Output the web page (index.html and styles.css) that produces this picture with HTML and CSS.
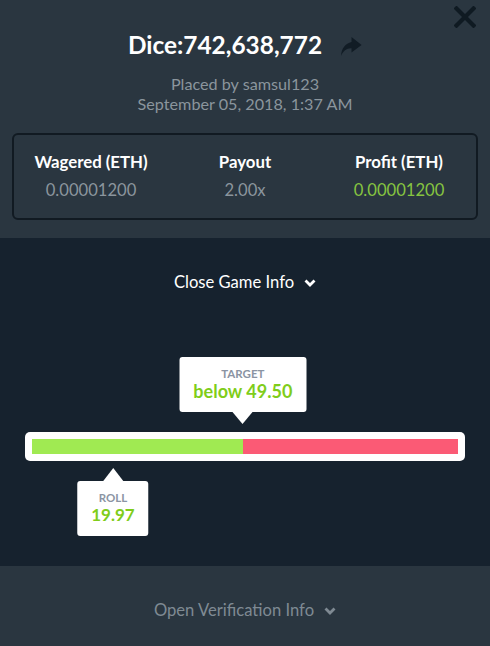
FILE: index.html
```html
<!DOCTYPE html>
<html lang="en">
<head>
  <meta charset="UTF-8" />
  <meta name="viewport" content="width=device-width, initial-scale=1.0" />
  <title>Bet Details</title>
  <link rel="stylesheet" href="styles.css">
</head>
<body>
  <div class="modal">
    <section class="bet-head">
      <button class="close-btn" aria-label="Close">
        <svg width="22" height="22" viewBox="0 0 22 22"><path d="M2.5 2.5 L19.5 19.5 M19.5 2.5 L2.5 19.5" stroke="#0f1a22" stroke-width="4.2" stroke-linecap="square"/></svg>
      </button>
      <div class="title-row">
        <h1>Dice:742,638,772</h1>
        <svg class="share" width="21" height="19" viewBox="0 0 21 19"><path d="M10.5 0 L20.6 8 L10.5 15.5 L10.5 11.2 C5.5 11 2.2 13.8 0 19 C0.4 11.5 4.5 6.2 10.5 5 Z" fill="#111c25"/></svg>
      </div>
      <p class="meta">Placed by samsul123</p>
      <p class="meta">September 05, 2018, 1:37 AM</p>

      <div class="stats">
        <div class="stat">
          <span class="stat-label">Wagered (ETH)</span>
          <span class="stat-value">0.00001200</span>
        </div>
        <div class="stat">
          <span class="stat-label">Payout</span>
          <span class="stat-value">2.00x</span>
        </div>
        <div class="stat">
          <span class="stat-label">Profit (ETH)</span>
          <span class="stat-value win">0.00001200</span>
        </div>
      </div>
    </section>

    <section class="game-info">
      <button class="toggle light">Close Game Info
        <svg width="12" height="8" viewBox="0 0 12 8"><path d="M1.5 1.5 L6 6 L10.5 1.5" fill="none" stroke="#fff" stroke-width="2.8"/></svg>
      </button>

      <div class="bar">
        <div class="track">
          <div class="bar-win" style="width: 49.5%"></div>
          <div class="bar-lose"></div>
          <div class="tip tip-top" style="left: 49.5%">
            <span class="tip-label">TARGET</span>
            <span class="tip-value">below 49.50</span>
          </div>
          <div class="tip tip-bottom" style="left: 19%">
            <span class="tip-label">ROLL</span>
            <span class="tip-value">19.97</span>
          </div>
        </div>
      </div>
    </section>

    <section class="verify">
      <button class="toggle">Open Verification Info
        <svg width="12" height="8" viewBox="0 0 12 8"><path d="M1.5 1.5 L6 6 L10.5 1.5" fill="none" stroke="#7f8a93" stroke-width="2.8"/></svg>
      </button>
    </section>
  </div>
</body>
</html>
```

FILE: styles.css
```css
body {
  margin: 0;
  font-family: Lato, 'Open Sans', sans-serif;
  background: #2a3640;
}
.modal {
  width: 490px;
  height: 646px;
  display: flex;
  flex-direction: column;
}
.bet-head {
  position: relative;
  height: 238px;
  box-sizing: border-box;
  padding: 30px 12px 0;
  background: #2a3640;
  text-align: center;
}
.close-btn {
  position: absolute;
  top: 6px;
  right: 14px;
  padding: 0;
  border: none;
  background: none;
  line-height: 0;
  cursor: pointer;
}
.title-row {
  display: flex;
  justify-content: center;
  align-items: center;
  gap: 19px;
}
h1 {
  margin: 0;
  color: #fff;
  font-size: 24.4px;
  font-weight: 700;
  line-height: 30px;
}
.share {
  margin-top: 2px;
}
.meta {
  margin: 0;
  color: #8b959d;
  font-size: 16.2px;
  line-height: 20px;
}
.bet-head .meta:first-of-type {
  margin-top: 14px;
}
.stats {
  display: grid;
  grid-template-columns: 1fr 1fr 1fr;
  margin-top: 19px;
  height: 87px;
  box-sizing: border-box;
  padding-top: 17px;
  border: 2px solid #111a22;
  border-radius: 6px;
}
.stat {
  display: flex;
  flex-direction: column;
  gap: 8px;
}
.stat-label {
  color: #fff;
  font-size: 16.8px;
  font-weight: 700;
  line-height: 20px;
}
.stat-value {
  color: #8b959d;
  font-size: 16.6px;
  line-height: 20px;
}
.stat-value.win {
  color: #86c440;
}
.game-info {
  height: 328px;
  box-sizing: border-box;
  padding-top: 34px;
  background: #16222e;
  text-align: center;
}
.toggle {
  display: inline-flex;
  align-items: center;
  gap: 10px;
  padding: 0;
  border: none;
  background: none;
  font-family: inherit;
  font-size: 16.6px;
  line-height: 20px;
  color: #7f8a93;
  cursor: pointer;
}
.toggle.light {
  color: #fff;
}
.toggle svg {
  margin-top: 2px;
}
.bar {
  margin: 140px 25px 0;
  padding: 7px;
  background: #fff;
  border-radius: 5px;
}
.track {
  position: relative;
  display: flex;
  height: 15px;
}
.bar-win {
  background: #a0ea52;
}
.bar-lose {
  flex: 1;
  background: #fb5a75;
}
.tip {
  position: absolute;
  display: flex;
  flex-direction: column;
  align-items: center;
  padding: 10px 14px 10px;
  background: #fff;
  border-radius: 3px;
  transform: translateX(-50%);
  white-space: nowrap;
}
.tip::after {
  content: "";
  position: absolute;
  left: 50%;
  margin-left: -10px;
  border-left: 10px solid transparent;
  border-right: 10px solid transparent;
}
.tip-top {
  bottom: calc(100% + 27px);
}
.tip-top::after {
  top: 100%;
  border-top: 12px solid #fff;
}
.tip-bottom {
  top: calc(100% + 27px);
}
.tip-bottom::after {
  bottom: 100%;
  border-bottom: 13px solid #fff;
}
.tip-label {
  color: #8b94a3;
  font-size: 11.5px;
  font-weight: 700;
  line-height: 13px;
}
.tip-value {
  color: #7fcd1a;
  font-size: 18px;
  font-weight: 700;
  line-height: 22px;
}
.tip-bottom .tip-value {
  font-size: 17px;
}
.verify {
  flex: 1;
  background: #2a3640;
  text-align: center;
  padding-top: 34px;
}
```
